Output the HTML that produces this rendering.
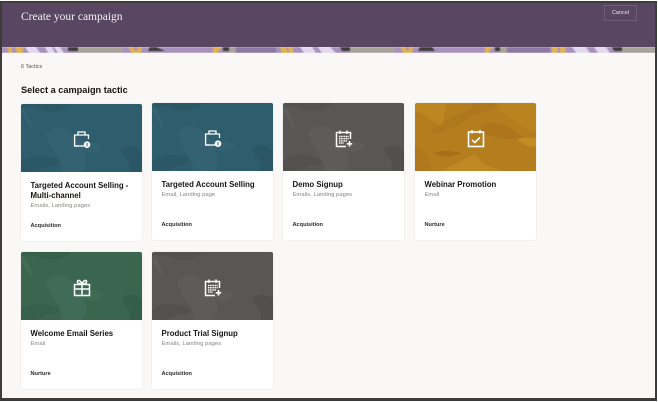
<!DOCTYPE html>
<html lang="en"><head><meta charset="utf-8"><title>Create your campaign</title>
<style>
html,body{margin:0;padding:0}
body{width:658px;height:402px;overflow:hidden;position:relative;background:#f9f8f6;font-family:"Liberation Sans",sans-serif;color:#161513}
.outer{position:absolute;left:0;top:0;width:658px;height:402px;box-sizing:border-box;border-style:solid;border-color:#fff;border-width:1px 1px 1px 0;pointer-events:none;z-index:10}
.frame{position:absolute;left:0;top:1px;width:657px;height:400px;box-sizing:border-box;border-style:solid;border-color:#3e3b39;border-width:2px 2px 3px 2px;pointer-events:none;z-index:9}
.hdr{position:absolute;left:0;top:0;width:658px;height:47px;background:#594662}
.strip{position:absolute;left:0;top:47px;filter:blur(.6px);clip-path:inset(0)}
.ttl{position:absolute;left:21px;top:9px;font:11.5px/16px "Liberation Serif",serif;color:#f4f1f3;white-space:nowrap}
.cancel{position:absolute;left:604px;top:5px;width:33px;height:16px;box-sizing:border-box;border:1px solid #6f5d78;color:#e8e3ea;font-size:5.5px;line-height:15px;text-align:center}
.count{position:absolute;left:21px;top:63px;font-size:5.5px;line-height:8px;color:#55524f}
h1{position:absolute;left:21px;top:83.5px;margin:0;font-size:9.2px;line-height:12px;font-weight:bold;color:#161513;white-space:nowrap}
.card{position:absolute;width:121px;height:137px;background:#fff;border-radius:2px;box-shadow:0 0 1.5px rgba(0,0,0,.12);overflow:hidden}
.card svg.bg{position:absolute;left:0;top:0;width:121px;height:68px;display:block}
.card svg.ic{position:absolute;left:46px;top:22.5px;width:30px;height:26px}
.t{position:absolute;left:9.5px;top:76.5px;width:110px;font-size:7.8px;line-height:10.5px;font-weight:bold;color:#161513}
.s{position:absolute;left:9.5px;top:87.5px;font-size:5.9px;line-height:9px;color:#8a8682;white-space:nowrap}
.c{position:absolute;left:9.5px;top:118px;font-size:5.6px;line-height:9px;font-weight:bold;color:#2b2a28;white-space:nowrap}
</style></head><body>
<svg width="0" height="0" style="position:absolute"><defs>
<g id="shapes">
<path d="M0 0H50C45 8 30 9 20 6 12 3 5 3 0 4Z" fill="#000" opacity=".05"/>
<path d="M2 3C8 12 11 20 12 28 7 20 2 12 0 8Z" fill="#fff" opacity=".04"/>
<path d="M25 30C36 18 48 24 54 32 60 40 72 36 82 42 78 50 70 50 62 46 68 56 66 64 60 68H42C42 56 30 46 25 30Z" fill="#fff" opacity=".035"/>
<path d="M0 58C8 50 22 50 38 56 40 62 32 63 26 62 20 68 12 68 0 68Z" fill="#000" opacity=".06"/>
<path d="M100 46C108 40 116 42 121 48V68H108C112 60 104 54 100 46Z" fill="#000" opacity=".07"/>
</g>
<g id="gold">
<path d="M0 0H32C28 12 30 20 27 24 18 18 8 10 0 8Z" fill="#d09f28" opacity=".3"/>
<path d="M14 30C24 20 38 12 58 6 62 10 50 18 44 22 36 24 26 32 14 30Z" fill="#8e5a12" opacity=".14"/>
<path d="M58 0H90C70 8 64 12 54 12Z" fill="#8e5a12" opacity=".14"/>
<path d="M80 0H121V30C104 22 88 12 80 0Z" fill="#d09f28" opacity=".18"/>
<path d="M66 22C80 16 96 24 108 34 96 38 78 36 66 28Z" fill="#8a5511" opacity=".16"/>
<path d="M102 36C110 34 116 34 121 36V44C112 44 106 40 102 36Z" fill="#dcaf30" opacity=".35"/>
<path d="M18 50C28 46 38 48 46 50 38 54 26 55 18 50Z" fill="#7d4d10" opacity=".25"/>
<path d="M26 68C36 62 48 58 60 50 62 58 74 64 88 68Z" fill="#d8a830" opacity=".28"/>
<path d="M0 44C6 44 14 50 16 68H0Z" fill="#925c12" opacity=".12"/>
</g>
<g id="brief" fill="none" stroke="#fff" stroke-width="1.3">
<path d="M11 19H7.6V8H21.5V12"/><path d="M11 8V5H18V8"/><path d="M7.6 19H18"/>
<circle cx="20" cy="17.7" r="3.3" fill="#fff" stroke="none"/><path d="M20 16V19.4" stroke="#2c5b6c" stroke-width="1"/>
</g>
<g id="cal" fill="none" stroke="#fff" stroke-width="1.5">
<path d="M21.5 13V6.5H7.5V20.5H17"/><path d="M11 4.5V8M18 4.5V8"/>
<path d="M10 10.5H20M10 12.7H20M10 14.9H18M10 17.1H15" stroke-width="1.4" stroke-dasharray="1.2 .5"/>
<path d="M20.5 15V20.5M17.8 17.8H23.2" stroke-width="1.7"/>
</g>
<g id="chk" fill="none" stroke="#fff" stroke-width="1.6">
<rect x="7.5" y="6" width="15" height="14.5"/><path d="M11 4V7.5M19 4V7.5"/>
<path d="M11 14L13.8 16.5 19 11.5"/>
</g>
<g id="gift" fill="none" stroke="#fff" stroke-width="1.5">
<rect x="7.5" y="9.5" width="15" height="11"/><path d="M7.5 14H22.5M15 9.5V20.5"/>
<path d="M15 9C12 9 10 8 10.5 6 11.3 4.5 14 6 15 9 16 6 18.7 4.5 19.5 6 20 8 18 9 15 9Z"/>
</g>
</defs></svg>

<div class="hdr"></div>
<svg class="strip" width="658" height="6" viewBox="0 0 658 6">
<rect width="658" height="6" fill="#a892bd"/>
<g fill="#e3d9ee"><path d="M25 0H36L40 6H29ZM45 0H52L55 6H48Z"/><path d="M54 0H60L64 6H58Z"/><path d="M300 0H312L316 6H304ZM318 0H330L336 6H322Z"/><path d="M572 0H586L590 6H576ZM594 0H606L610 6H598Z"/></g>
<g fill="#e3b24d"><path d="M7 0H11L13 6H9ZM15 0H23V6H17Z"/><path d="M128 0H133L137 6H132ZM138 0H142L141 6H136Z"/><path d="M213 0H222L217 6H213Z"/><path d="M280 0H286L288 6H282ZM288 0H293V6H289Z"/><path d="M400 0H405L409 6H404ZM409 0H413L412 6H408Z"/><path d="M485 0H493L488 6H485Z"/><path d="M552 0H558L557 6H552ZM560 0H565L566 6H560Z"/></g>
<g fill="#a8a39b"><rect x="78" y="0" width="45" height="6"/><rect x="350" y="0" width="45" height="6"/><rect x="500" y="0" width="7" height="6"/><rect x="230" y="0" width="5" height="6"/><rect x="622" y="0" width="36" height="6"/></g>
<g fill="#3f3c39"><rect x="68" y="0" width="10" height="4"/><path d="M150 0H156L165 4H148Z"/><rect x="223" y="0" width="6" height="4"/><path d="M340 0H350V4H342Z"/><path d="M420 0H432L435 4H418Z"/><rect x="495" y="0" width="5" height="4"/><path d="M612 0H622V4H614Z"/></g>
<g fill="#8e78a4"><rect x="236" y="0" width="40" height="6"/><rect x="507" y="0" width="43" height="6"/></g>
</svg>
<div class="ttl">Create your campaign</div>
<div class="cancel">Cancel</div>
<div class="count">6 Tactics</div>
<h1>Select a campaign tactic</h1>

<div class="card" style="left:21px;top:104px">
<svg class="bg" viewBox="0 0 121 68"><rect width="121" height="68" fill="#2e5d6d"/><use href="#shapes"/></svg>
<svg class="ic" viewBox="0 0 30 26"><use href="#brief"/></svg>
<div class="t">Targeted Account Selling - Multi-channel</div><div class="s" style="top:98px">Emails, Landing pages</div><div class="c">Acquisition</div></div>

<div class="card" style="left:152px;top:103px">
<svg class="bg" viewBox="0 0 121 68"><rect width="121" height="68" fill="#2e5d6d"/><use href="#shapes"/></svg>
<svg class="ic" viewBox="0 0 30 26"><use href="#brief"/></svg>
<div class="t">Targeted Account Selling</div><div class="s">Email, Landing page</div><div class="c">Acquisition</div></div>

<div class="card" style="left:283px;top:103px">
<svg class="bg" viewBox="0 0 121 68"><rect width="121" height="68" fill="#585756"/><use href="#shapes"/></svg>
<svg class="ic" viewBox="0 0 30 26"><use href="#cal"/></svg>
<div class="t">Demo Signup</div><div class="s">Emails, Landing pages</div><div class="c">Acquisition</div></div>

<div class="card" style="left:415px;top:103px">
<svg class="bg" viewBox="0 0 121 68"><rect width="121" height="68" fill="#b47d1e"/><use href="#gold"/></svg>
<svg class="ic" viewBox="0 0 30 26"><use href="#chk"/></svg>
<div class="t">Webinar Promotion</div><div class="s">Email</div><div class="c">Nurture</div></div>

<div class="card" style="left:21px;top:252px">
<svg class="bg" viewBox="0 0 121 68"><rect width="121" height="68" fill="#3a6650"/><use href="#shapes"/></svg>
<svg class="ic" viewBox="0 0 30 26"><use href="#gift"/></svg>
<div class="t">Welcome Email Series</div><div class="s">Email</div><div class="c">Nurture</div></div>

<div class="card" style="left:152px;top:252px">
<svg class="bg" viewBox="0 0 121 68"><rect width="121" height="68" fill="#585756"/><use href="#shapes"/></svg>
<svg class="ic" viewBox="0 0 30 26"><use href="#cal"/></svg>
<div class="t">Product Trial Signup</div><div class="s">Emails, Landing pages</div><div class="c">Acquisition</div></div>

<div class="frame"></div>
<div class="outer"></div>
</body></html>
